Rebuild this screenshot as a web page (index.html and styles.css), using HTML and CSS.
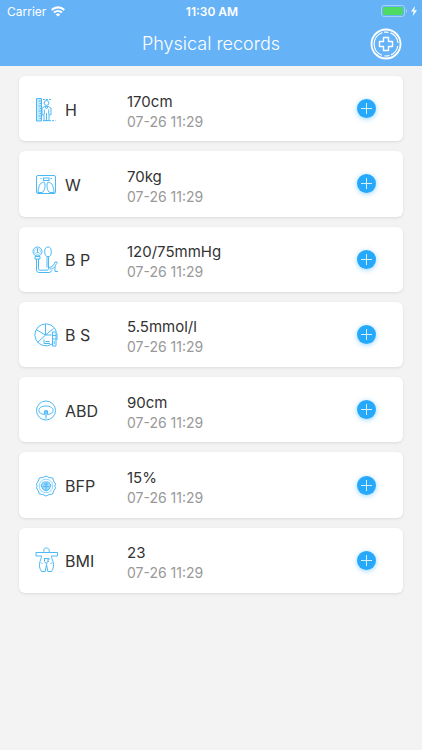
FILE: index.html
```html
<!DOCTYPE html>
<html lang="en">
<head>
    <meta charset="UTF-8">
    <meta name="viewport" content="width=device-width, initial-scale=1.0">
    <title>Physical records</title>
    <link rel="stylesheet" href="styles.css">
</head>
<body>
    <header class="header">
        <div class="status-bar">
            <div class="status-left">
                <span>Carrier</span>
                <svg class="wifi" viewBox="0 0 14 11" fill="none" stroke="#fff" stroke-width="2.1">
                    <path d="M.7 4C4.300.5 9.700.5 13.300 4M3 6.600c2.300-2.200 5.700-2.200 8 0"/>
                    <path d="M7 10.600 4.700 8.500c1.300-1.200 3.300-1.200 4.600 0z" fill="#fff" stroke="none"/>
                </svg>
            </div>
            <span class="time">11:30 AM</span>
            <div class="status-right">
                <svg class="battery" viewBox="0 0 27 12">
                    <rect x=".5" y=".5" width="23" height="11" rx="2.5" fill="none" stroke="#a5d2fa"/>
                    <rect x="2" y="2" width="20" height="8" rx="1" fill="#4cd964"/>
                    <path d="M25 4v4c1.500-.6 1.500-3.400 0-4z" fill="#a5d2fa"/>
                </svg>
                <svg class="bolt" viewBox="0 0 6 10" fill="#fff">
                    <path d="M4 0 0 5.600h2.600L1.800 10 6 4.200H3.300z"/>
                </svg>
            </div>
        </div>
        <div class="nav-bar">
            <h1>Physical records</h1>
            <button class="nav-btn" type="button" aria-label="Health">
                <svg viewBox="0 0 32 32" fill="none" stroke="#fff">
                    <circle cx="16" cy="16" r="14.500" stroke-width="1.800"/>
                    <path d="M12.400 4.600A12 12 0 0 0 12 27.300M14.500 27.900A12 12 0 0 0 19.500 27.500M21 26.900A12 12 0 0 0 27.800 18M28 15A12 12 0 0 0 20.500 4.900M18.500 4.300A12 12 0 0 0 14 4.200" stroke-width="1.200"/>
                    <path d="M13.500 9.500h5v4h4v5h-4v4h-5v-4h-4v-5h4z" stroke-width="1.400" stroke-linejoin="round"/>
                </svg>
            </button>
        </div>
    </header>

    <main class="records">
        <section class="card">
            <svg class="icon" viewBox="0 0 28 28">
                <path d="M4.500 2.500h5v22.500h-5z" fill="#cdeafd"/>
                <path d="M6.500 5h3M7.500 7.500h2M6.500 10h3M7.500 12.500h2M6.500 15h3M7.500 17.500h2M6.500 20h3M7.500 22.500h2"/>
                <path d="M11 3.500h9M11 24.700h12.500" stroke-dasharray="2 1"/>
                <circle cx="14.500" cy="7" r="2.400"/>
                <path d="M12.500 10.500h4l2.500 1.800v6.500h-2v5.700h-5v-5.700h-2v-6.500zM12.300 13.500v5M16.700 13.500v5M14.500 17v7M13 10.700l1.500 2.300 1.500-2.300"/>
            </svg>
            <h2>H</h2>
            <div class="info">
                <p class="value">170cm</p>
                <p class="date">07-26 11:29</p>
            </div>
            <button class="add" type="button" aria-label="Add height"></button>
        </section>

        <section class="card">
            <svg class="icon" viewBox="0 0 28 28">
                <rect x="4.500" y="4.500" width="19" height="18" rx="1.500"/>
                <rect x="11.500" y="7" width="5.500" height="2.500"/>
                <path d="M12.500 11.500c-2.900-1.200-6 1.500-6.500 10h4c2.800-.8 3.700-7.300 2.500-10zM15.500 11.500c2.900-1.200 6 1.500 6.500 10h-4c-2.800-.8-3.700-7.300-2.500-10z"/>
                <path d="M8.500 7.500h1M18.500 7.500h1.500"/>
            </svg>
            <h2>W</h2>
            <div class="info">
                <p class="value">70kg</p>
                <p class="date">07-26 11:29</p>
            </div>
            <button class="add" type="button" aria-label="Add weight"></button>
        </section>

        <section class="card">
            <svg class="icon" viewBox="0 0 28 28">
                <circle cx="5.500" cy="5.500" r="4.500"/>
                <circle cx="5.500" cy="5.500" r="3" stroke-width=".5"/>
                <path d="M5.500 2.500v4M4.500 6.500h2M3 10.500h5v2.500H3z"/>
                <ellipse cx="16" cy="5.800" rx="3.300" ry="4.800"/>
                <path d="M4.500 13v11q0 2.500 2.500 2.500h10q2 0 3-2.200M6.500 13v9.700q0 1.500 1.500 1.500h7q1.500 0 1.500-1.500v-12M15 11v10.500"/>
                <path d="M17 21.500c3 0 5.500-3 6-5.500h2v1.500c-2.500 1.500-2 4.500-2 8h3M17.500 23c3 0 3.800-.5 5-2"/>
            </svg>
            <h2>B P</h2>
            <div class="info">
                <p class="value">120/75mmHg</p>
                <p class="date">07-26 11:29</p>
            </div>
            <button class="add" type="button" aria-label="Add blood pressure"></button>
        </section>

        <section class="card">
            <svg class="icon" viewBox="0 0 28 28">
                <path d="M20 23A11 11 0 1 1 24.500 11"/>
                <path d="M13.500 3v11L4 8.500M13.500 14 5.500 21.500M13.500 14l8-6.500M13.500 14h6"/>
                <path d="M12 18.500v4h6M13.500 20.500h4"/>
                <path d="M20.500 11h3.500v14h-3.500zM20.500 14.500H24M20.500 18H24M22.200 20v3M25 12v7"/>
            </svg>
            <h2>B S</h2>
            <div class="info">
                <p class="value">5.5mmol/l</p>
                <p class="date">07-26 11:29</p>
            </div>
            <button class="add" type="button" aria-label="Add blood sugar"></button>
        </section>

        <section class="card">
            <svg class="icon" viewBox="0 0 28 28">
                <circle cx="14" cy="13.500" r="9.500"/>
                <path d="M12.500 17.500C4.500 17 5 9 14 9s9.500 8 1.500 8.500"/>
                <path d="M12.500 17.500v-3.500h3v3.500M14 13v8.500" stroke-width="1.200"/>
            </svg>
            <h2>ABD</h2>
            <div class="info">
                <p class="value">90cm</p>
                <p class="date">07-26 11:29</p>
            </div>
            <button class="add" type="button" aria-label="Add abdomen"></button>
        </section>

        <section class="card">
            <svg class="icon" viewBox="0 0 28 28">
                <path d="M14 4l3.200 1.500 3.500.5 1 3.200 2 3-1 1.800 1 1.800-2 3-1 3.200-3.500.5L14 24l-3.200-1.500-3.500-.5-1-3.200-2-3 1-1.800-1-1.800 2-3 1-3.200 3.500-.5z" stroke-linejoin="round"/>
                <circle cx="14" cy="14" r="6.800" stroke-width=".6"/>
                <path d="M11.500 10h5l2.500 3.200-2 4.300-3 1.500-3-1.500-2-4.300z" fill="#a6dbfc"/>
                <path d="M12 12.200h4M10.500 14.600h7M14 11.200v7"/>
            </svg>
            <h2>BFP</h2>
            <div class="info">
                <p class="value">15%</p>
                <p class="date">07-26 11:29</p>
            </div>
            <button class="add" type="button" aria-label="Add body fat"></button>
        </section>

        <section class="card">
            <svg class="icon" viewBox="0 0 28 28">
                <path d="M12.500 5.500C10.800 3.500 12 1 14.500 1S18.200 3.500 16.500 5.500"/>
                <path d="M4 5.500h21.500v3.500H19.500c0 2 .8 3.500 1.500 5.500 1.200 4 .5 7-1.500 10h-3.700l-1.300-7-1.300 7H9.500c-2-3-2.700-6-1.500-10 .7-2 1.500-3.500 1.500-5.500H4z"/>
                <path d="M12 11.500h5v1.500h-2M12.500 11.500v3l2 2.500 1-2.500h1.500M9 15.500l1.500 1.500M20 15.500 18.500 17"/>
            </svg>
            <h2>BMI</h2>
            <div class="info">
                <p class="value">23</p>
                <p class="date">07-26 11:29</p>
            </div>
            <button class="add" type="button" aria-label="Add body mass index"></button>
        </section>
    </main>
</body>
</html>
```
FILE: styles.css
```css
* {
    box-sizing: border-box;
}
body {
    margin: 0;
    background-color: #f3f3f3;
    color: #333;
    font-family: Inter, "Liberation Sans", sans-serif;
}
h1, h2, p {
    margin: 0;
    font-weight: 400;
}
button {
    padding: 0;
    border: none;
    cursor: pointer;
}
.header {
    background-color: #65b2f7;
    color: #fff;
}
.status-bar {
    display: grid;
    grid-template-columns: 1fr auto 1fr;
    align-items: center;
    height: 22px;
    padding: 0 5px 0 7px;
    font-size: 12px;
}
.status-left {
    display: flex;
    align-items: center;
    gap: 5px;
}
.wifi {
    width: 14px;
    height: 11px;
}
.time {
    font-weight: 600;
}
.status-right {
    display: flex;
    justify-content: flex-end;
    align-items: center;
    gap: 3px;
}
.battery {
    width: 27px;
    height: 12px;
}
.bolt {
    width: 6px;
    height: 10px;
}
.nav-bar {
    display: grid;
    grid-template-columns: 1fr auto 1fr;
    align-items: center;
    height: 44px;
    padding: 0 20px;
}
.nav-bar h1 {
    grid-column: 2;
    font-size: 18px;
    font-weight: 300;
    line-height: 22px;
}
.nav-btn {
    justify-self: end;
    width: 32px;
    height: 32px;
    background: none;
}
.nav-btn svg {
    display: block;
}
.records {
    display: grid;
    grid-auto-rows: 1fr;
    gap: 10px;
    min-height: 517px;
    margin: 10px 19px;
}
.card {
    display: flex;
    align-items: center;
    padding: 0 27px 0 13px;
    background-color: #fff;
    border-radius: 6px;
    box-shadow: 0 1px 3px rgba(0, 0, 0, 0.1);
}
.icon {
    width: 28px;
    height: 28px;
    margin-top: 2px;
    fill: none;
    stroke: #4bb9f8;
    stroke-width: 1;
}
.card h2 {
    width: 62px;
    margin: 2px 0 0 5px;
    font-size: 16px;
    line-height: 20px;
}
.info {
    flex: 1;
    padding-top: 6px;
}
.value {
    font-size: 15px;
    line-height: 20px;
}
.date {
    color: #999;
    font-size: 14px;
    line-height: 20px;
}
.add {
    position: relative;
    width: 19px;
    height: 19px;
    border-radius: 50%;
    background-color: #27a9fb;
    box-shadow: 0 1px 5px rgba(39, 169, 251, 0.5);
}
/* plus sign */
.add::before, .add::after {
    content: "";
    position: absolute;
    top: 9px;
    left: 4px;
    width: 11px;
    height: 1px;
    background-color: #d9f0ff;
}
.add::after {
    transform: rotate(90deg);
}
```
